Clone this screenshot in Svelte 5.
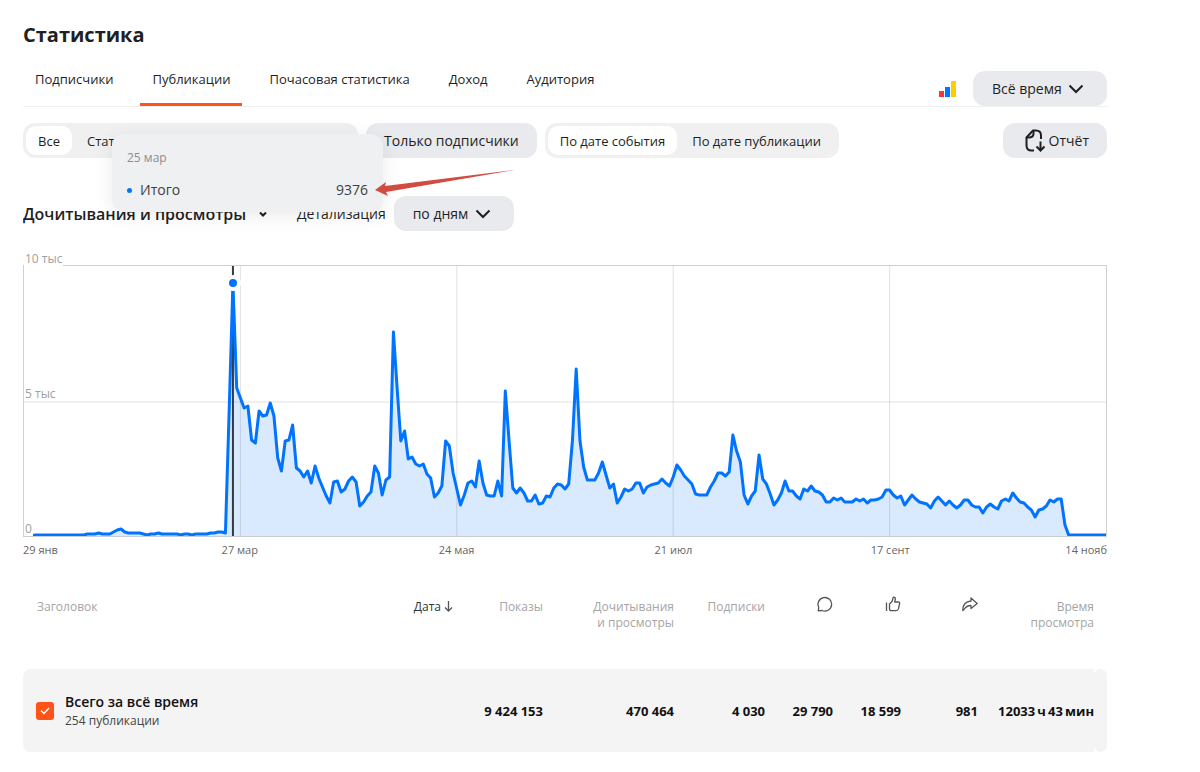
<script>
    let tabs = ['Подписчики', 'Публикации', 'Почасовая статистика', 'Доход', 'Аудитория'];
    let activeTab = 'Публикации';

    let kinds = ['Все', 'Статьи'];
    let activeKind = 'Все';

    let dateModes = ['По дате события', 'По дате публикации'];
    let activeMode = 'По дате события';

    let onlySubscribers = false;
    let allChecked = true;

    const axisDates = ['29 янв', '27 мар', '24 мая', '21 июл', '17 сент', '14 нояб'];
    const totals = ['', '9 424 153', '470 464', '4 030', '29 790', '18 599', '981', '12033\u2009ч\u200943\u2009мин'];

    // one value per day, 27 units = 1000 views
    const views = [
        0,0,0,1,1,1,1,1,1,1,1,1,1,1,1,1,1,2,2,2,3,2,2,2,4,6,7,4,3,
        3,3,3,2,1,2,2,3,2,2,2,2,2,1,2,2,1,2,2,2,2,3,3,4,4,3,
        127,253,148,138,128,130,96,93,125,120,121,133,120,78,65,95,96,111,68,
        65,59,65,53,70,58,49,40,33,54,55,44,47,55,59,54,30,34,40,44,70,63,41,
        56,59,204,148,95,105,77,79,72,70,72,62,58,39,43,50,95,90,63,47,31,41,
        53,55,49,75,53,41,40,40,55,40,145,96,48,43,48,43,35,35,41,32,33,40,39,
        48,52,51,47,52,96,167,95,69,56,56,56,63,74,61,48,52,33,39,47,45,47,53,
        53,43,49,51,52,53,57,53,50,59,71,66,60,56,52,42,41,41,41,49,55,63,63,
        60,64,101,85,74,41,32,40,45,81,57,52,42,31,36,43,55,45,45,40,37,47,45,
        50,45,44,41,34,34,38,36,38,34,34,34,37,35,37,33,36,36,37,39,46,46,41,
        38,40,31,36,41,37,34,33,32,28,35,39,35,31,35,31,28,31,36,36,31,29,29,
        23,29,32,29,27,35,37,35,43,38,34,33,29,26,19,26,27,30,36,34,37,37,11,
        1,1,1,1,1,1,1,1,1,1,1
    ];

    const width = 1084;
    const height = 270;
    const peak = 56;

    const dayX = (day) => day * width / (views.length - 1);

    const line = views.map((v, i) => dayX(i).toFixed(1) + ',' + (height - v)).join(' ');
    const area = `0,${height} ${line} ${width},${height}`;
</script>

<svelte:head>
    <title>Статистика</title>
</svelte:head>

<main>
    <h1>Статистика</h1>

    <div class="top">
        <nav>
            {#each tabs as tab}
                <button class="tab" class:active={tab == activeTab} on:click={() => activeTab = tab}>{tab}</button>
            {/each}
        </nav>
        <div class="period">
            <svg width="17" height="16" viewBox="0 0 17 16" aria-hidden="true">
                <rect x="0" y="10" width="5" height="6" fill="#ff3333" />
                <rect x="6" y="6" width="5" height="10" fill="#0077ff" />
                <rect x="12" y="0" width="5" height="16" fill="#ffcc00" />
            </svg>
            <div class="drop">
                <select aria-label="Период">
                    <option>Всё время</option>
                </select>
                <svg width="16" height="10" viewBox="0 0 16 10"><path d="M1.500 1.500 8 8l6.500-6.500" /></svg>
            </div>
        </div>
    </div>

    <div class="filters">
        <div class="segments kinds">
            {#each kinds as kind}
                <button class:active={kind == activeKind} on:click={() => activeKind = kind}>{kind}</button>
            {/each}
        </div>
        <button class="pill" aria-pressed={onlySubscribers} on:click={() => onlySubscribers = !onlySubscribers}>Только подписчики</button>
        <div class="segments">
            {#each dateModes as mode}
                <button class:active={mode == activeMode} on:click={() => activeMode = mode}>{mode}</button>
            {/each}
        </div>
        <button class="pill report">
            <svg width="20" height="23" viewBox="0 0 20 23" aria-hidden="true">
                <path d="M9 21.500H6.500Q1.500 21.500 1.500 16.500V8.500L8 1.500h3q5 0 5 5V10" />
                <path d="M1.500 8.500H4q4 0 4.500-3.500L8.500 1.500" />
                <path d="M15.500 12.500v9M11.500 17.500l4 4 4-4" />
            </svg>
            Отчёт
        </button>
    </div>

    <div class="chart-head">
        <div class="drop metric">
            <select aria-label="Показатель">
                <option>Дочитывания и просмотры</option>
            </select>
            <svg width="8" height="6" viewBox="0 0 8 6"><path d="M1 1.500 4 4.500l3-3" /></svg>
        </div>
        <label for="detail">Детализация</label>
        <div class="drop detail">
            <select id="detail">
                <option>по дням</option>
            </select>
            <svg width="16" height="10" viewBox="0 0 16 10"><path d="M1.500 1.500 8 8l6.500-6.500" /></svg>
        </div>
    </div>

    <div class="chart">
        <svg class="plot" viewBox="0 0 {width} {height}" preserveAspectRatio="none">
            <polygon class="area" points={area} />
            {#each [58, 116, 174, 232] as day}
                <line class="grid" x1={dayX(day)} x2={dayX(day)} y1="0" y2={height} />
            {/each}
            <line class="grid" x1="0" x2={width} y1="136" y2="136" />
            <line class="cursor" x1={dayX(peak)} x2={dayX(peak)} y1="0" y2={height} />
            <polyline class="line" points={line} />
        </svg>
        <span class="scale max">10 тыс</span>
        <span class="scale mid">5 тыс</span>
        <span class="scale min">0</span>
        <span class="dot" style="left: {peak / (views.length - 1) * 100}%; top: {(1 - views[peak] / height) * 100}%"></span>

        <div class="tooltip">
            <div class="tooltip-date">25 мар</div>
            <div class="tooltip-row">
                <span class="bullet"></span>
                <span>Итого</span>
                <span class="amount">9376</span>
            </div>
        </div>
        <svg class="arrow" width="142" height="30" viewBox="0 0 142 30" aria-hidden="true">
            <path d="M141 2 11 18 12 14 1 22 14 28 12 24Z" />
        </svg>
    </div>

    <div class="dates">
        {#each axisDates as date}
            <span>{date}</span>
        {/each}
    </div>

    <table>
        <colgroup>
            <col />
            <col class="c-date" />
            <col class="c-shows" />
            <col class="c-reads" />
            <col class="c-subs" />
            <col class="c-icon" />
            <col class="c-icon" />
            <col class="c-share" />
            <col class="c-time" />
            <col class="c-tail" />
        </colgroup>
        <thead>
            <tr>
                <th class="title">Заголовок</th>
                <th class="sorted">Дата<svg width="9" height="12" viewBox="0 0 9 12"><path d="M4.500 0v10M1 6.500l3.500 3.500L8 6.500" /></svg></th>
                <th>Показы</th>
                <th>Дочитывания<br />и просмотры</th>
                <th>Подписки</th>
                <th class="icon" aria-label="Комментарии">
                    <svg width="16" height="16" viewBox="0 0 16 16"><path d="M1.200 14.800 1.800 11.500A6.800 6.800 0 1 1 5 14.500Z" /></svg>
                </th>
                <th class="icon" aria-label="Лайки">
                    <svg width="16" height="16" viewBox="0 0 16 16"><path d="M1.500 6.500v8.500M4.500 8 7 5.500 8.300 1.200Q10.500 .8 10.300 3L9.700 6h3.600q1.700 0 1.300 1.700l-1.100 5Q13 14.700 11 14.700H6.500q-2 0-2-2Z" /></svg>
                </th>
                <th class="icon" aria-label="Репосты">
                    <svg width="16" height="16" viewBox="0 0 16 16"><path d="M9 5V2l6.200 5.500L9 12.500v-3Q4.500 9.500 2 13.500l-1.200 1Q.5 6 9 5Z" /></svg>
                </th>
                <th>Время<br />просмотра</th>
                <th></th>
            </tr>
        </thead>
        <tbody>
            <tr>
                <td class="first">
                    <label>
                        <input type="checkbox" bind:checked={allChecked} />
                        <svg class="tick" width="10" height="8" viewBox="0 0 10 8"><path d="M1 3.500 4 6.500l5-5.500" /></svg>
                        <span>
                            <b>Всего за всё время</b>
                            <small>254 публикации</small>
                        </span>
                    </label>
                </td>
                {#each totals as total}
                    <td>{total}</td>
                {/each}
                <td class="tail"></td>
            </tr>
        </tbody>
    </table>
</main>

<style>
    :global(body) {
        margin: 0;
        background: #fff;
    }

    main {
        padding: 20px 93px 20px 23px;
        font-family: "Open Sans", "Noto Sans", sans-serif;
        font-size: 13px;
        color: #1f1f24;
    }

    h1 {
        margin: 0 0 21px;
        font-size: 20px;
        line-height: 30px;
        font-weight: 700;
    }

    button, select {
        margin: 0;
        border: 0;
        background: none;
        font: inherit;
        color: inherit;
        cursor: pointer;
    }

    svg path {
        fill: none;
        stroke: #1f1f24;
        stroke-width: 2;
    }

    .top {
        display: flex;
        justify-content: space-between;
        border-bottom: 1px solid #f0f0f0;
    }

    nav {
        display: flex;
        gap: 15px;
    }

    .tab {
        height: 35px;
        padding: 0 12px 19px;
        font-weight: 500;
        line-height: 16px;
        white-space: nowrap;
    }

    .tab.active {
        border-bottom: 3px solid #ff5317;
        padding-bottom: 16px;
    }

    .period {
        display: flex;
        align-items: center;
        gap: 17px;
    }

    .drop {
        display: grid;
        align-items: center;
        border-radius: 12px;
        background: #e8eaee;
    }

    .drop select, .drop svg {
        grid-area: 1 / 1;
    }

    .drop select {
        appearance: none;
        height: 35px;
        padding: 0 45px 0 19px;
        font-size: 14px;
        font-weight: 500;
    }

    .drop svg {
        justify-self: end;
        margin-right: 23px;
        pointer-events: none;
    }

    .filters {
        display: flex;
        gap: 8px;
        margin-top: 16px;
    }

    .segments {
        display: flex;
        box-sizing: border-box;
        height: 35px;
        padding: 3px;
        border-radius: 12px;
        background: #f0f0f0;
    }

    .segments button {
        padding: 0 15px;
        border-radius: 10px;
        font-weight: 500;
        white-space: nowrap;
    }

    .segments button.active {
        padding: 0 12px;
        background: #fff;
    }

    .segments.kinds {
        width: 335px;
    }

    .pill {
        height: 35px;
        padding: 0 18px;
        border-radius: 12px;
        background: #e8eaee;
        font-size: 14px;
        font-weight: 500;
        white-space: nowrap;
    }

    .report {
        display: flex;
        align-items: center;
        gap: 4px;
        margin-left: auto;
        padding: 0 18px 0 22px;
    }

    .chart-head {
        display: flex;
        align-items: center;
        margin: 38px 0 34px;
    }

    .drop.metric {
        background: none;
    }

    .metric select {
        padding: 0 20px 0 0;
        font-size: 16px;
        font-weight: 600;
    }

    .metric svg {
        margin-right: 0;
    }

    .chart-head label {
        margin: 0 8px 0 30px;
        font-size: 14px;
    }

    .chart {
        position: relative;
        box-sizing: border-box;
        height: 272px;
        border: 1px solid #d0d0d0;
        border-bottom-color: #c5ccd2;
    }

    .plot {
        display: block;
        width: 100%;
        height: 100%;
    }

    .plot * {
        vector-effect: non-scaling-stroke;
    }

    .area {
        fill: #d9eafe;
    }

    .grid {
        stroke: rgba(0, 0, 0, 0.12);
    }

    .cursor {
        stroke: #333a44;
        stroke-width: 2;
    }

    .line {
        fill: none;
        stroke: #0073ff;
        stroke-width: 3;
        stroke-linejoin: round;
    }

    .scale {
        position: absolute;
        left: 0;
        padding: 0 1px;
        font-size: 12px;
        line-height: 14px;
        color: #a0a0a0;
        background: #fff;
    }

    .scale.max {
        top: -14px;
        padding-bottom: 1px;
    }

    .scale.mid {
        top: 121px;
    }

    .scale.min {
        bottom: 0;
    }

    .dot {
        position: absolute;
        width: 8px;
        height: 8px;
        border: 4px solid #fff;
        border-radius: 50%;
        background: #0073ff;
        transform: translate(-50%, -50%);
    }

    .tooltip {
        position: absolute;
        left: 88px;
        top: -132px;
        box-sizing: border-box;
        width: 271px;
        height: 78px;
        padding: 14px 15px;
        border-radius: 12px;
        background: #eff0f2;
        box-shadow: 0 4px 20px rgba(0, 0, 0, 0.08);
        color: #3c3f44;
    }

    .tooltip-date {
        font-size: 12px;
        line-height: 20px;
        color: #8b8d91;
    }

    .tooltip-row {
        display: flex;
        align-items: center;
        gap: 8px;
        margin-top: 12px;
        font-size: 14px;
        line-height: 20px;
    }

    .bullet {
        width: 5px;
        height: 5px;
        border-radius: 50%;
        background: #0073ff;
    }

    .amount {
        margin-left: auto;
    }

    .arrow {
        position: absolute;
        left: 350px;
        top: -98px;
    }

    .arrow path {
        fill: #d24b40;
        stroke: none;
    }

    .dates {
        display: grid;
        grid-template-columns: 1fr 2fr 2fr 2fr 2fr 1fr;
        margin-top: 5px;
        font-size: 11px;
        line-height: 16px;
        text-align: center;
        color: #666;
    }

    .dates span:first-child {
        text-align: left;
    }

    .dates span:last-child {
        text-align: right;
    }

    table {
        width: 100%;
        margin-top: 41px;
        border-collapse: separate;
        border-spacing: 0;
        table-layout: fixed;
    }

    .c-date { width: 60px; }
    .c-shows { width: 90px; }
    .c-reads { width: 131px; }
    .c-subs { width: 91px; }
    .c-icon { width: 68px; }
    .c-share { width: 77px; }
    .c-time { width: 116px; }
    .c-tail { width: 13px; }

    th {
        height: 70px;
        padding: 0;
        vertical-align: top;
        text-align: right;
        font-size: 12px;
        line-height: 16px;
        font-weight: 400;
        color: #a5a5a5;
    }

    th.title {
        padding-left: 14px;
        text-align: left;
    }

    th.sorted {
        color: #333;
    }

    th.sorted svg {
        margin-left: 3px;
        vertical-align: -2px;
    }

    th.icon svg {
        display: block;
        margin: -3px 0 0 auto;
    }

    th svg path {
        stroke: #555;
        stroke-width: 1.3;
        stroke-linejoin: round;
    }

    td {
        height: 83px;
        padding: 0;
        background: #f4f4f4;
        text-align: right;
        font-weight: 700;
        color: #111;
        white-space: nowrap;
    }

    td.first {
        border-radius: 8px 0 0 8px;
        text-align: left;
    }

    td.tail {
        border-radius: 8px;
    }

    td label {
        display: grid;
        grid-template-columns: 18px 1fr;
        align-items: center;
        column-gap: 11px;
        padding-left: 13px;
    }

    td input {
        grid-area: 1 / 1;
        appearance: none;
        width: 18px;
        height: 18px;
        margin: 0;
        border-radius: 3px;
        background: #ddd;
    }

    td input:checked {
        background: #ff5317;
    }

    .tick {
        grid-area: 1 / 1;
        justify-self: center;
        pointer-events: none;
    }

    .tick path {
        stroke: #fff;
        stroke-width: 1.5;
    }

    b, small {
        display: block;
        line-height: 19px;
    }

    b {
        font-size: 14px;
        font-weight: 600;
    }

    small {
        font-size: 12px;
        font-weight: 400;
        color: #444;
    }
</style>
